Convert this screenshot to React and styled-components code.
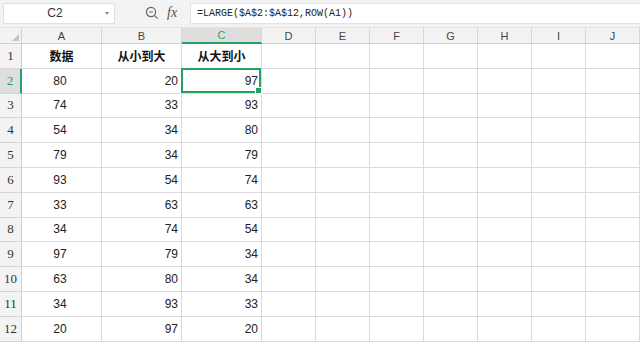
import styled, { createGlobalStyle, css } from "styled-components";

const GlobalStyle = createGlobalStyle`
  html, body {
    margin: 0;
    padding: 0;
    background: #fff;
  }
  body {
    width: 640px;
    height: 343px;
    overflow: hidden;
    font-family: "Liberation Sans", "Noto Sans CJK SC", sans-serif;
  }
`;

const GREEN = "#21a366";
const LINE = "#dadada";

const Toolbar = styled.div`
  display: flex;
  align-items: center;
  height: 28px;
  background: #f3f3f3;
  box-sizing: border-box;
  padding: 2px 0 3px 3px;
  border-bottom: 1px solid #e2e2e2;
`;

const NameBox = styled.div`
  position: relative;
  width: 112px;
  height: 21px;
  box-sizing: border-box;
  background: #fff;
  border: 1px solid #e0e0e0;
  display: flex;
  align-items: center;
  justify-content: center;
  font-size: 12px;
  color: #333;
  padding-right: 8px;
`;

const Caret = styled.span`
  position: absolute;
  right: 5px;
  top: 8px;
  border-left: 2px solid transparent;
  border-right: 2px solid transparent;
  border-top: 3px solid #888;
`;

const Tools = styled.div`
  display: flex;
  align-items: center;
  gap: 8px;
  padding-left: 30px;
  width: 75px;
  box-sizing: border-box;
`;

const Fx = styled.span`
  font-family: "Liberation Serif", serif;
  font-style: italic;
  font-size: 14px;
  color: #555;
`;

const Formula = styled.div`
  flex: 1;
  height: 21px;
  box-sizing: border-box;
  background: #fff;
  border: 1px solid #e2e2e2;
  border-right: none;
  display: flex;
  align-items: center;
  padding-left: 6px;
  font-family: "Liberation Mono", monospace;
  font-size: 10px;
  color: #222;
`;

const Sheet = styled.div`
  display: grid;
  grid-template-columns: 22px 80px 80px 80px repeat(7, 54px);
  grid-template-rows: 16px repeat(12, 24.8px);
`;

const Cell = styled.div`
  position: relative;
  box-sizing: border-box;
  border-right: 1px solid ${LINE};
  border-bottom: 1px solid ${LINE};
  display: flex;
  align-items: center;
  justify-content: ${(p) => (p.$align === "right" ? "flex-end" : "center")};
  padding: 0 3px 0 0;
  font-family: "Liberation Sans", "Noto Sans CJK SC", sans-serif;
  font-size: 12px;
  color: #222;
  ${(p) =>
    p.$bold &&
    css`
      font-family: "Noto Sans CJK SC", sans-serif;
      font-weight: 700;
      font-size: 12px;
      color: #111;
      padding: 0;
    `}
`;

const ColHead = styled.div`
  box-sizing: border-box;
  background: ${(p) => (p.$active ? "#dedede" : "#f3f3f3")};
  border-right: 1px solid #d6d6d6;
  border-bottom: 1px solid ${(p) => (p.$active ? GREEN : "#cfcfcf")};
  border-bottom-width: ${(p) => (p.$active ? "2px" : "1px")};
  display: flex;
  align-items: center;
  justify-content: center;
  font-size: 11px;
  color: ${(p) => (p.$active ? GREEN : "#444")};
`;

const RowHead = styled.div`
  box-sizing: border-box;
  background: ${(p) => (p.$active ? "#dedede" : "#f3f3f3")};
  border-right: ${(p) => (p.$active ? `2px solid ${GREEN}` : "1px solid #cfcfcf")};
  border-bottom: 1px solid #d6d6d6;
  display: flex;
  align-items: center;
  justify-content: center;
  font-family: "Liberation Serif", serif;
  font-size: 13px;
  color: ${(p) => (p.$active ? GREEN : "#333")};
`;

const Corner = styled.div`
  position: relative;
  box-sizing: border-box;
  background: #f3f3f3;
  border-right: 1px solid #cfcfcf;
  border-bottom: 1px solid #cfcfcf;
`;

const CornerMark = styled.span`
  position: absolute;
  right: 2px;
  bottom: 2px;
  border-left: 7px solid transparent;
  border-bottom: 7px solid #c4c4c4;
`;

const Selection = styled.span`
  position: absolute;
  inset: -1px 0 0 -1px;
  border: 2px solid ${GREEN};
  pointer-events: none;
`;

const Handle = styled.span`
  position: absolute;
  right: -3px;
  bottom: -3px;
  width: 5px;
  height: 5px;
  background: ${GREEN};
  border: 1px solid #fff;
`;

const cols = ["A", "B", "C", "D", "E", "F", "G", "H", "I", "J"];
const a = [80, 74, 54, 79, 93, 33, 34, 97, 63, 34, 20];
const b = [20, 33, 34, 34, 54, 63, 74, 79, 80, 93, 97];
const c = [97, 93, 80, 79, 74, 63, 54, 34, 34, 33, 20];

function ZoomIcon() {
  return (
    <svg width="14" height="14" viewBox="0 0 14 14" fill="none" stroke="#666" strokeWidth="1.2">
      <circle cx="6" cy="6" r="4.6" />
      <path d="M4 6h4M9.4 9.4l3.2 3.2" />
    </svg>
  );
}

export default function App() {
  return (
    <>
      <GlobalStyle />
      <Toolbar>
        <NameBox>
          C2
          <Caret />
        </NameBox>
        <Tools>
          <ZoomIcon />
          <Fx>fx</Fx>
        </Tools>
        <Formula>=LARGE($A$2:$A$12,ROW(A1))</Formula>
      </Toolbar>
      <Sheet>
        <Corner>
          <CornerMark />
        </Corner>
        {cols.map((l) => (
          <ColHead key={l} $active={l === "C"}>
            {l}
          </ColHead>
        ))}

        <RowHead>1</RowHead>
        <Cell $bold>数据</Cell>
        <Cell $bold>从小到大</Cell>
        <Cell $bold>从大到小</Cell>
        {cols.slice(3).map((l) => (
          <Cell key={l} />
        ))}

        {a.map((v, i) => (
          <Row key={i} n={i + 2} a={v} b={b[i]} c={c[i]} />
        ))}
      </Sheet>
    </>
  );
}

function Row({ n, a, b, c }) {
  const active = n === 2;
  return (
    <>
      <RowHead $active={active}>{n}</RowHead>
      <Cell>{a}</Cell>
      <Cell $align="right">{b}</Cell>
      <Cell $align="right">
        {c}
        {active && (
          <Selection>
            <Handle />
          </Selection>
        )}
      </Cell>
      {cols.slice(3).map((l) => (
        <Cell key={l} />
      ))}
    </>
  );
}
